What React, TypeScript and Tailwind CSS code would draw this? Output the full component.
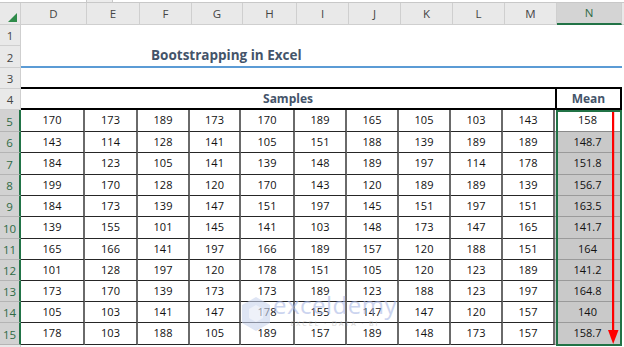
import React from "react";

const colW = [66, 53, 52, 51, 54, 52, 52, 52, 52, 52, 65];
const letters = ["D", "E", "F", "G", "H", "I", "J", "K", "L", "M", "N"];

const data: [number[], string][] = [
  [[170, 173, 189, 173, 170, 189, 165, 105, 103, 143], "158"],
  [[143, 114, 128, 141, 105, 151, 188, 139, 189, 189], "148.7"],
  [[184, 123, 105, 141, 139, 148, 189, 197, 114, 178], "151.8"],
  [[199, 170, 128, 120, 170, 143, 120, 189, 189, 139], "156.7"],
  [[184, 173, 139, 147, 151, 197, 145, 151, 197, 151], "163.5"],
  [[139, 155, 101, 145, 141, 103, 148, 173, 147, 165], "141.7"],
  [[165, 166, 141, 197, 166, 189, 157, 120, 188, 151], "164"],
  [[101, 128, 197, 120, 178, 151, 105, 120, 123, 189], "141.2"],
  [[173, 170, 139, 173, 173, 189, 123, 188, 123, 197], "164.8"],
  [[105, 103, 141, 147, 178, 155, 147, 147, 120, 157], "140"],
  [[178, 103, 188, 105, 189, 157, 189, 148, 173, 157], "158.7"],
];
const rowH = [22, 21, 22, 21, 21, 22, 21, 21, 21, 21, 22];

function RowHead({ n, h, sel }: { n: string; h: number; sel?: boolean }) {
  return (
    <div
      className={
        "w-[21px] shrink-0 flex items-end justify-center pb-[1px] text-[11.5px] leading-[16px] border-b border-r " +
        (sel
          ? "bg-[#d2d2d2] text-[#2f6b45] border-b-[#b4b4b4] border-r-[#217346] border-r-2"
          : "bg-[#e9e9e9] text-[#444] border-b-[#cfcfcf] border-r-[#cfcfcf]")
      }
      style={{ height: h }}
    >
      {n}
    </div>
  );
}

export default function App() {
  return (
    <div
      className="relative w-[624px] h-[347px] overflow-hidden bg-white"
      style={{ fontFamily: '"Open Sans", "Liberation Sans", sans-serif' }}
    >
      {/* top strip */}
      <div className="flex h-[3px] border-b border-[#c8c8c8]">
        <div className="w-[87px] bg-white border-r border-[#c8c8c8]" />
        <div className="w-[25px] bg-[#ececec]" />
        <div className="flex-1 bg-white border-l border-[#c8c8c8]" />
      </div>
      {/* column headers */}
      <div className="flex h-[22px] bg-[#e9e9e9]">
        <div className="w-[21px] shrink-0 relative border-r border-b border-[#cfcfcf]">
          <svg className="absolute right-[3px] bottom-[2px]" width="9" height="9" viewBox="0 0 9 9">
            <polygon points="9,0 9,9 0,9" fill="#2e8b4a" />
          </svg>
        </div>
        {letters.map((l, i) => (
          <div
            key={l}
            className={
              "shrink-0 flex items-center justify-center text-[11.5px] border-r border-[#cfcfcf] " +
              (l === "N"
                ? "bg-[#d4d4d4] text-[#2f6b45] border-b-2 border-b-[#217346]"
                : "text-[#444] border-b border-b-[#cfcfcf]")
            }
            style={{ width: colW[i] }}
          >
            {l}
          </div>
        ))}
        <div className="flex-1 border-b border-[#cfcfcf]" />
      </div>
      {/* row 1 */}
      <div className="flex">
        <RowHead n="1" h={21} />
        <div className="flex-1" />
      </div>
      {/* row 2 title */}
      <div className="flex">
        <RowHead n="2" h={22} />
        <div className="w-[601px] h-[22px] border-b-2 border-[#5b9bd5] flex items-center">
          <span className="ml-[130px] text-[13.5px] font-bold text-[#44546a] leading-none">
            Bootstrapping in Excel
          </span>
        </div>
      </div>
      {/* row 3 */}
      <div className="flex">
        <RowHead n="3" h={21} />
        <div className="w-[601px] h-[21px] border-b-2 border-black" />
      </div>
      {/* row 4 header */}
      <div className="flex">
        <RowHead n="4" h={21} />
        <div className="w-[536px] h-[21px] border-b-2 border-r-2 border-black flex items-center justify-center text-[12px] font-bold text-[#44546a]">
          Samples
        </div>
        <div className="w-[65px] h-[21px] border-b-2 border-r-2 border-black flex items-center justify-center text-[12px] font-bold text-[#44546a]">
          Mean
        </div>
      </div>
      {/* data rows */}
      {data.map(([vals, mean], r) => (
        <div className="flex" key={r}>
          <RowHead n={String(r + 5)} h={rowH[r]} sel />
          {vals.map((v, i) => (
            <div
              key={i}
              className="shrink-0 flex items-center justify-center text-[11px] text-[#111] border-b border-b-[#262626] border-r-2 border-r-[#6a6a6a]"
              style={{ width: colW[i] - (i === 0 ? 2 : 0), height: rowH[r] }}
            >
              {v}
            </div>
          ))}
          <div
            className={
              "shrink-0 flex items-center justify-center text-[11px] text-[#111] border-b " +
              (r === 0 ? "bg-white border-b-[#8a8a8a]" : "bg-[#c9c9c9] border-b-[#9a9a9a]")
            }
            style={{ width: 65, height: rowH[r] }}
          >
            {mean}
          </div>
        </div>
      ))}
      {/* row 16 partial */}
      <div className="flex">
        <RowHead n="" h={6} />
        <div className="flex-1" />
      </div>

      {/* selection rectangle */}
      <div className="absolute left-[556px] top-[110px] w-[66px] h-[236px] border-2 border-[#217346] pointer-events-none" />
      {/* red arrow */}
      <svg className="absolute left-[606px] top-[112px]" width="14" height="233" viewBox="0 0 14 233">
        <rect x="6" y="0" width="2.2" height="220" fill="#ff0000" />
        <polygon points="2,218 12.5,218 7.2,232" fill="#ff0000" />
      </svg>
      {/* watermark */}
      <div className="absolute left-[240px] top-[296px] flex items-start opacity-60 pointer-events-none">
        <svg width="32" height="36" viewBox="0 0 32 36">
          <polygon points="16,1 30,9 30,27 16,35 2,27 2,9" fill="#c9d4ee" />
          <polygon points="16,9 23,13 23,22 16,26 9,22 9,13" fill="#e4e9f6" />
        </svg>
        <div className="flex flex-col items-center ml-[1px] -mt-[3px]">
          <span
            className="text-[24px] leading-none text-[#a9b8e6] tracking-[0.5px]"
            style={{ fontFamily: '"Open Sans", sans-serif' }}
          >
            exceldemy
          </span>
          <span className="text-[7px] leading-none mt-[3px] text-[#b8b8b8] tracking-[2px]">
            EXCEL · DATA · BI
          </span>
        </div>
      </div>
    </div>
  );
}
